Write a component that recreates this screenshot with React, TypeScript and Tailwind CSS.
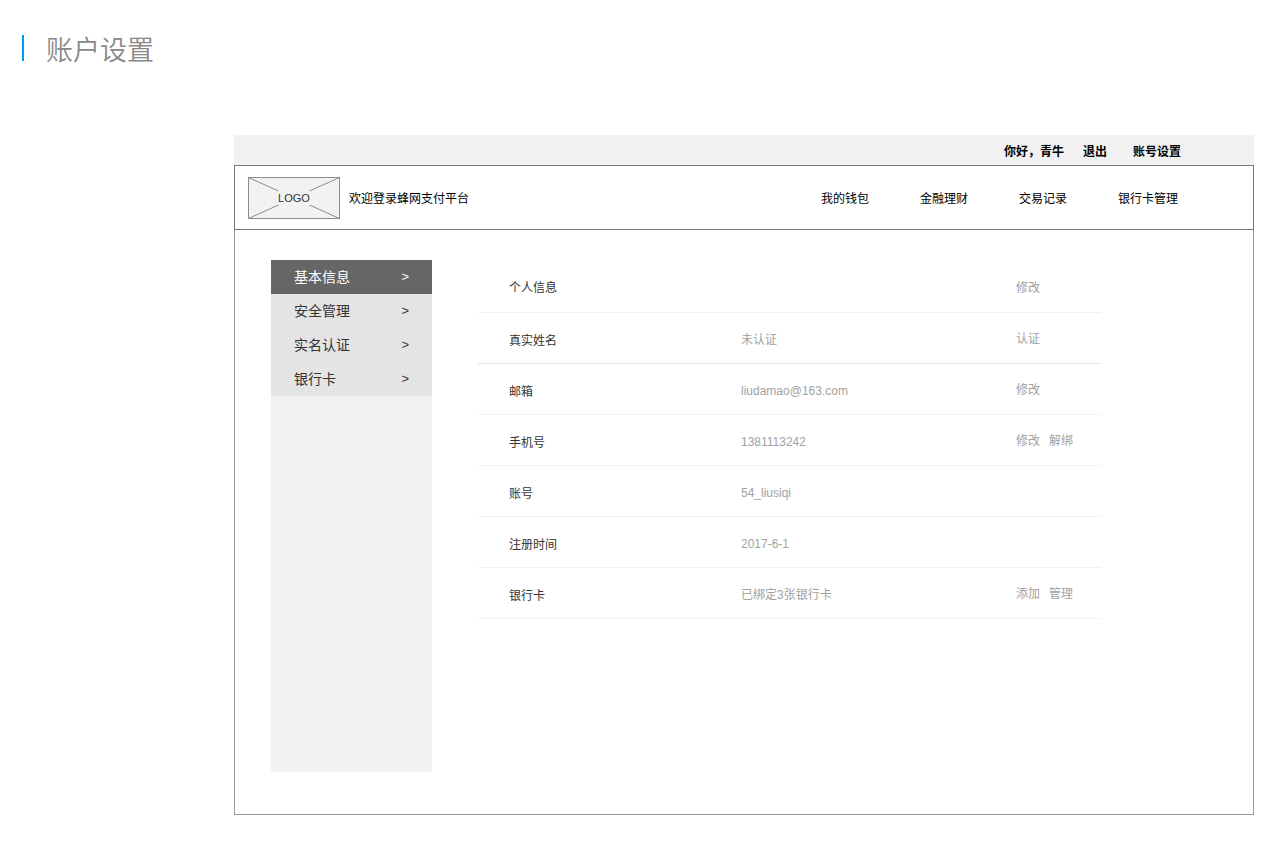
import React, { useState } from 'react';

interface Action {
    name: string;
}

interface AccountRow {
    label: string;
    value: string;
    actions: Action[];
}

const topLinks = ['退出', '账号设置'];

const mainLinks = ['我的钱包', '金融理财', '交易记录', '银行卡管理'];

const menuItems = ['基本信息', '安全管理', '实名认证', '银行卡'];

const rows: AccountRow[] = [
    { label: '真实姓名', value: '未认证', actions: [{ name: '认证' }] },
    { label: '邮箱', value: 'liudamao@163.com', actions: [{ name: '修改' }] },
    { label: '手机号', value: '1381113242', actions: [{ name: '修改' }, { name: '解绑' }] },
    { label: '账号', value: '54_liusiqi', actions: [] },
    { label: '注册时间', value: '2017-6-1', actions: [] },
    { label: '银行卡', value: '已绑定3张银行卡', actions: [{ name: '添加' }, { name: '管理' }] },
];

const Logo: React.FC = () => (
    <div className="relative flex h-[42px] w-[92px] items-center justify-center bg-[#f2f2f2]">
        <svg className="absolute inset-0" width="92" height="42" viewBox="0 0 92 42" fill="none" stroke="#8c8c8c">
            <rect x="0.5" y="0.5" width="91" height="41"/>
            <path d="M0.5 0.5L91.5 41.5M91.5 0.5L0.5 41.5"/>
        </svg>
        <span className="relative bg-[#f2f2f2] px-px text-[11px] leading-[14px] text-[#333333]">LOGO</span>
    </div>
);

const ActionButtons: React.FC<{ actions: Action[] }> = ({ actions }) => (
    <div className="flex gap-[9px]">
        {actions.map(action => (
            <button key={action.name} type="button" className="cursor-pointer">{action.name}</button>
        ))}
    </div>
);

const AccountPage: React.FC = () => {
    const [active, setActive] = useState(menuItems[0]);

    return (
        <div className="min-h-screen bg-white pt-[35px] pr-5 pb-10 pl-[22px] font-['Liberation_Sans','Noto_Sans_CJK_SC',sans-serif] text-xs leading-5 text-black">
            <h1 className="flex h-[26px] items-center border-l-2 border-[#0099ff] pt-[6px] pl-[22px] text-[27px] font-[350] text-[#888888]">
                账户设置
            </h1>

            <div className="mt-[74px] ml-[212px]">
                <div className="flex h-[30px] items-center justify-end gap-[19px] bg-[#f1f1f1] pt-1 pr-[73px] font-bold">
                    <span>你好，青牛</span>
                    <div className="flex gap-[26px]">
                        {topLinks.map(link => (
                            <a key={link} href="#">{link}</a>
                        ))}
                    </div>
                </div>

                <header className="flex h-[65px] items-center border border-[#777777] pr-[75px] pl-[13px]">
                    <Logo/>
                    <span className="ml-[9px] pt-[2px]">欢迎登录蜂网支付平台</span>
                    <nav className="ml-auto flex gap-[51px] pt-[2px]">
                        {mainLinks.map(link => (
                            <a key={link} href="#">{link}</a>
                        ))}
                    </nav>
                </header>

                <div className="flex border-x border-b border-[#999999] pt-[30px] pr-[152px] pb-[42px] pl-9">
                    <nav className="min-h-[512px] w-[161px] shrink-0 bg-[#f1f1f1] text-sm">
                        {menuItems.map(item => (
                            <button
                                key={item}
                                type="button"
                                onClick={() => setActive(item)}
                                className={`flex h-[34px] w-full cursor-pointer items-center justify-between px-[23px] ${item === active ? 'bg-[#666666] text-white' : 'bg-[#e4e4e4] text-[#333333]'}`}
                            >
                                <span>{item}</span>
                                <span className="text-[13px]">&gt;</span>
                            </button>
                        ))}
                    </nav>

                    <table className="ml-[46px] w-full table-fixed self-start text-left text-[#a1a1a1]">
                        <colgroup>
                            <col className="w-[263px]"/>
                            <col/>
                            <col className="w-[85px]"/>
                        </colgroup>
                        <thead>
                        <tr className="h-[52px] border-b border-[#f2f2f2] align-bottom">
                            <th colSpan={2} className="pb-[14px] pl-[31px] font-normal text-[#333333]">个人信息</th>
                            <td className="pb-[14px]"><ActionButtons actions={[{ name: '修改' }]}/></td>
                        </tr>
                        </thead>
                        <tbody>
                        {rows.map(row => (
                            <tr key={row.label} className="h-[51px] border-b border-[#f2f2f2] align-bottom first:border-[#e4e4e4]">
                                <th scope="row" className="pb-3 pl-[31px] font-normal text-[#333333]">{row.label}</th>
                                <td className="pb-[13px]">{row.value}</td>
                                <td className="pb-[14px]"><ActionButtons actions={row.actions}/></td>
                            </tr>
                        ))}
                        </tbody>
                    </table>
                </div>
            </div>
        </div>
    );
};

export default AccountPage;
